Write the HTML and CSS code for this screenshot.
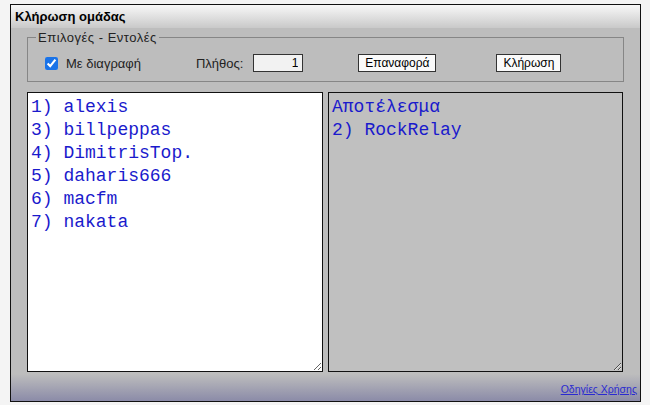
FILE: index.html
```html
<!DOCTYPE html>
<html lang="el">
<head>
  <meta charset="UTF-8">
  <title>Κλήρωση ομάδας</title>
  <link rel="stylesheet" href="styles.css">
</head>
<body>
  <div class="box">
    <div class="box-head">Κλήρωση ομάδας</div>
    <div class="box-body">
      <fieldset class="options">
        <legend>Επιλογές - Εντολές</legend>
        <label class="check"><input type="checkbox" checked> Με διαγραφή</label>
        <label class="count">Πλήθος: <input type="text" class="num" value="1"></label>
        <button class="btn btn-reset">Επαναφορά</button>
        <button class="btn btn-draw">Κλήρωση</button>
      </fieldset>
      <div class="lists">
        <textarea class="list list-names" readonly>1) alexis
3) billpeppas
4) DimitrisTop.
5) daharis666
6) macfm
7) nakata</textarea>
        <textarea class="list list-result" readonly>Αποτέλεσμα
2) RockRelay</textarea>
      </div>
    </div>
    <div class="box-foot"><a href="#">Οδηγίες Χρήσης</a></div>
  </div>
</body>
</html>
```

FILE: styles.css
```css
body {
  margin: 0;
  background: #f4f4f4;
  font-family: "Liberation Sans", Arial, sans-serif;
  font-size: 13px;
}
.box {
  margin: 4px 0 0 10px;
  width: 629px;
  height: 396px;
  border: 1px solid #111;
  background: #bdbdbd;
  display: flex;
  flex-direction: column;
}
.box-head {
  height: 23px;
  line-height: 23px;
  padding-left: 4px;
  font-size: 13px;
  font-weight: bold;
  color: #000;
  background: linear-gradient(#f8f8f8, #c9c9c9);
}
.box-body {
  flex: 1;
  padding: 0 16px 0 16px;
  display: flex;
  flex-direction: column;
}
.options {
  margin: 2px 0 0 0;
  padding: 9px 0 9px 17px;
  border: 1px solid #868686;
  display: flex;
  align-items: center;
  color: #222;
}
.options legend {
  padding: 0 2px;
  margin-left: -9px;
  color: #222;
  letter-spacing: 0.5px;
}
.check {
  display: flex;
  align-items: center;
  gap: 8px;
}
.check input {
  margin: 0;
  width: 13px;
  height: 13px;
  accent-color: #1a73e8;
}
.count {
  margin-left: 55px;
  display: flex;
  align-items: center;
  gap: 10px;
}
.num {
  width: 50px;
  height: 18px;
  box-sizing: border-box;
  border: 1px solid #333;
  background: #f2f2f2;
  text-align: right;
  font: 12px "Liberation Sans", Arial, sans-serif;
  padding: 0 4px;
}
.btn {
  height: 18px;
  box-sizing: border-box;
  border: 1px solid #333;
  background: #fafafa;
  font: 12px "Liberation Sans", Arial, sans-serif;
  padding: 0 4px;
  line-height: 15px;
}
.btn-reset {
  margin-left: 55px;
  width: 78px;
}
.btn-draw {
  margin-left: 60px;
  width: 65px;
}
.lists {
  margin-top: 10px;
  display: flex;
  gap: 5px;
}
.list {
  width: 296px;
  height: 280px;
  box-sizing: border-box;
  border: 1px solid #111;
  margin: 0;
  padding: 3px 3px;
  font: 18px/23px "Liberation Mono", "DejaVu Sans Mono", monospace;
  color: #1a1acc;
  resize: both;
}
.list-names {
  background: #fff;
}
.list-result {
  width: 295px;
  background: #c0c0c0;
}
.box-foot {
  height: 27px;
  background: linear-gradient(#bdbdbd, #8b8ba8);
  text-align: right;
  padding-right: 3px;
  line-height: 30px;
}
.box-foot a {
  color: #2a2ad0;
  font-size: 10.5px;
}
```
